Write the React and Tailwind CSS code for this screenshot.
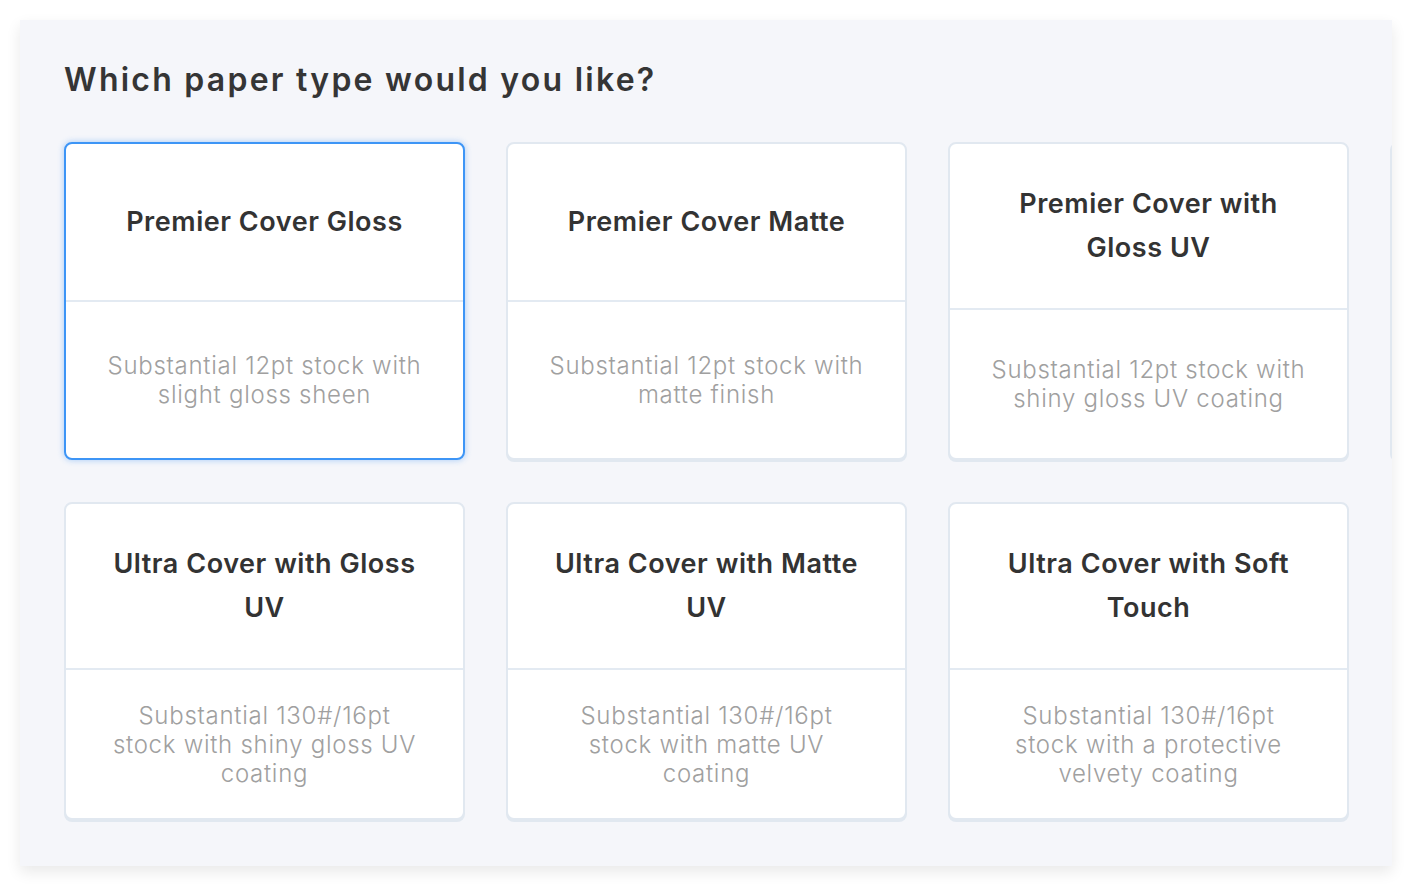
const cards = [
  [
    { title: "Premier Cover Gloss", desc: "Substantial 12pt stock with slight gloss sheen", selected: true },
    { title: "Premier Cover Matte", desc: "Substantial 12pt stock with matte finish" },
    { title: "Premier Cover with Gloss UV", desc: "Substantial 12pt stock with shiny gloss UV coating" },
    { title: "", desc: "" },
  ],
  [
    { title: "Ultra Cover with Gloss UV", desc: "Substantial 130#/16pt stock with shiny gloss UV coating" },
    { title: "Ultra Cover with Matte UV", desc: "Substantial 130#/16pt stock with matte UV coating" },
    { title: "Ultra Cover with Soft Touch", desc: "Substantial 130#/16pt stock with a protective velvety coating" },
  ],
];

function Card({ title, desc, selected }) {
  return (
    <div
      className={`flex w-[401px] shrink-0 flex-col rounded-[8px] border-2 bg-white ${
        selected
          ? "border-[#3d95f6] shadow-[0_0_6px_rgba(61,149,246,0.45)]"
          : "border-[#e1e8f0] shadow-[0_2px_0_#e1e8f0]"
      }`}
    >
      {/* title */}
      <div className="flex min-h-[158px] items-center justify-center border-b-2 border-[#e3eaf2] px-[40px] py-[38px] text-center">
        <h3 className="text-[27px] font-semibold leading-[44px] tracking-[0.02em] text-[#333]">{title}</h3>
      </div>
      {/* description */}
      <div className="flex flex-1 items-center justify-center px-[30px] py-[30px] text-center">
        <p className="max-w-[316px] text-[24px] font-light leading-[29px] tracking-[0.03em] text-[#a0a0a0]">{desc}</p>
      </div>
    </div>
  );
}

export default function App() {
  return (
    <div className="min-h-screen bg-white p-[20px]" style={{ fontFamily: "Inter, 'Noto Sans', sans-serif" }}>
      <div className="h-[846px] w-[1372px] overflow-hidden bg-[#f5f6fa] pl-[44px] pt-[38px] shadow-[0_6px_14px_rgba(0,0,0,0.09)]">
        <h1 className="text-[32px] font-semibold leading-[44px] tracking-[0.07em] text-[#353535]">
          Which paper type would you like?
        </h1>

        <div className="mt-[40px] flex flex-col gap-[42px]">
          {cards.map((row, i) => (
            <div key={i} className="flex h-[318px] items-stretch gap-[41px]">
              {row.map((c, j) => (
                <Card key={j} {...c} />
              ))}
            </div>
          ))}
        </div>
      </div>
    </div>
  );
}
